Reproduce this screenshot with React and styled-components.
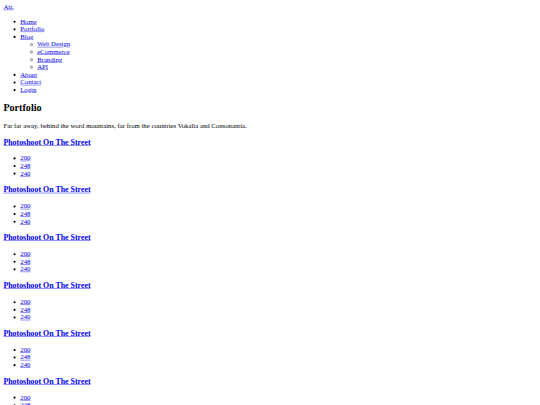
import React from "react";
import styled, { createGlobalStyle } from "styled-components";

const GlobalStyle = createGlobalStyle`
  html, body {
    margin: 0;
    overflow: hidden;
    background: #fff;
  }
  a {
    color: #0000ee;
    text-decoration: underline;
  }
`;

// the page is laid out at 1280px wide, then shrunk to fit the 540px window
const Page = styled.div`
  width: 1280px;
  box-sizing: border-box;
  padding: 8px;
  font-family: "Liberation Serif", "Times New Roman", serif;
  font-size: 16px;
  line-height: normal;
  color: #000;
  transform: scale(0.421875);
  transform-origin: 0 0;
`;

const Header = styled.header`
  display: block;
`;

const Brand = styled.a``;

const NavList = styled.ul`
  margin: 16px 0;
  padding-left: 40px;
  list-style: disc;
`;

const SubList = styled.ul`
  margin: 0;
  padding-left: 40px;
  list-style: circle;
`;

const Title = styled.h2`
  font-size: 24px;
  font-weight: bold;
  margin: 19.92px 0;
`;

const Lead = styled.p`
  margin: 16px 0;
`;

const ProjectTitle = styled.h3`
  font-size: 18.72px;
  font-weight: bold;
  margin: 18.72px 0;
`;

const StatList = styled.ul`
  margin: 16px 0;
  padding-left: 40px;
  list-style: disc;
`;

const blogItems = ["Web Design", "eCommerce", "Branding", "API"];
const projects = Array.from({ length: 6 }, () => ({
  title: "Photoshoot On The Street",
  stats: ["200", "248", "240"],
}));

export default function App() {
  return (
    <Page>
      <GlobalStyle />
      <Header>
        <Brand href="#">Air.</Brand>
        <nav>
          <NavList>
            <li><a href="#">Home</a></li>
            <li><a href="#">Portfolio</a></li>
            <li>
              <a href="#">Blog</a>
              <SubList>
                {blogItems.map((b) => (
                  <li key={b}><a href="#">{b}</a></li>
                ))}
              </SubList>
            </li>
            <li><a href="#">About</a></li>
            <li><a href="#">Contact</a></li>
            <li><a href="#">Login</a></li>
          </NavList>
        </nav>
      </Header>
      <main>
        <Title>Portfolio</Title>
        <Lead>Far far away, behind the word mountains, far from the countries Vokalia and Consonantia.</Lead>
        {projects.map((p, i) => (
          <article key={i}>
            <ProjectTitle><a href="#">{p.title}</a></ProjectTitle>
            <StatList>
              {p.stats.map((s, j) => (
                <li key={j}><a href="#">{s}</a></li>
              ))}
            </StatList>
          </article>
        ))}
      </main>
    </Page>
  );
}
